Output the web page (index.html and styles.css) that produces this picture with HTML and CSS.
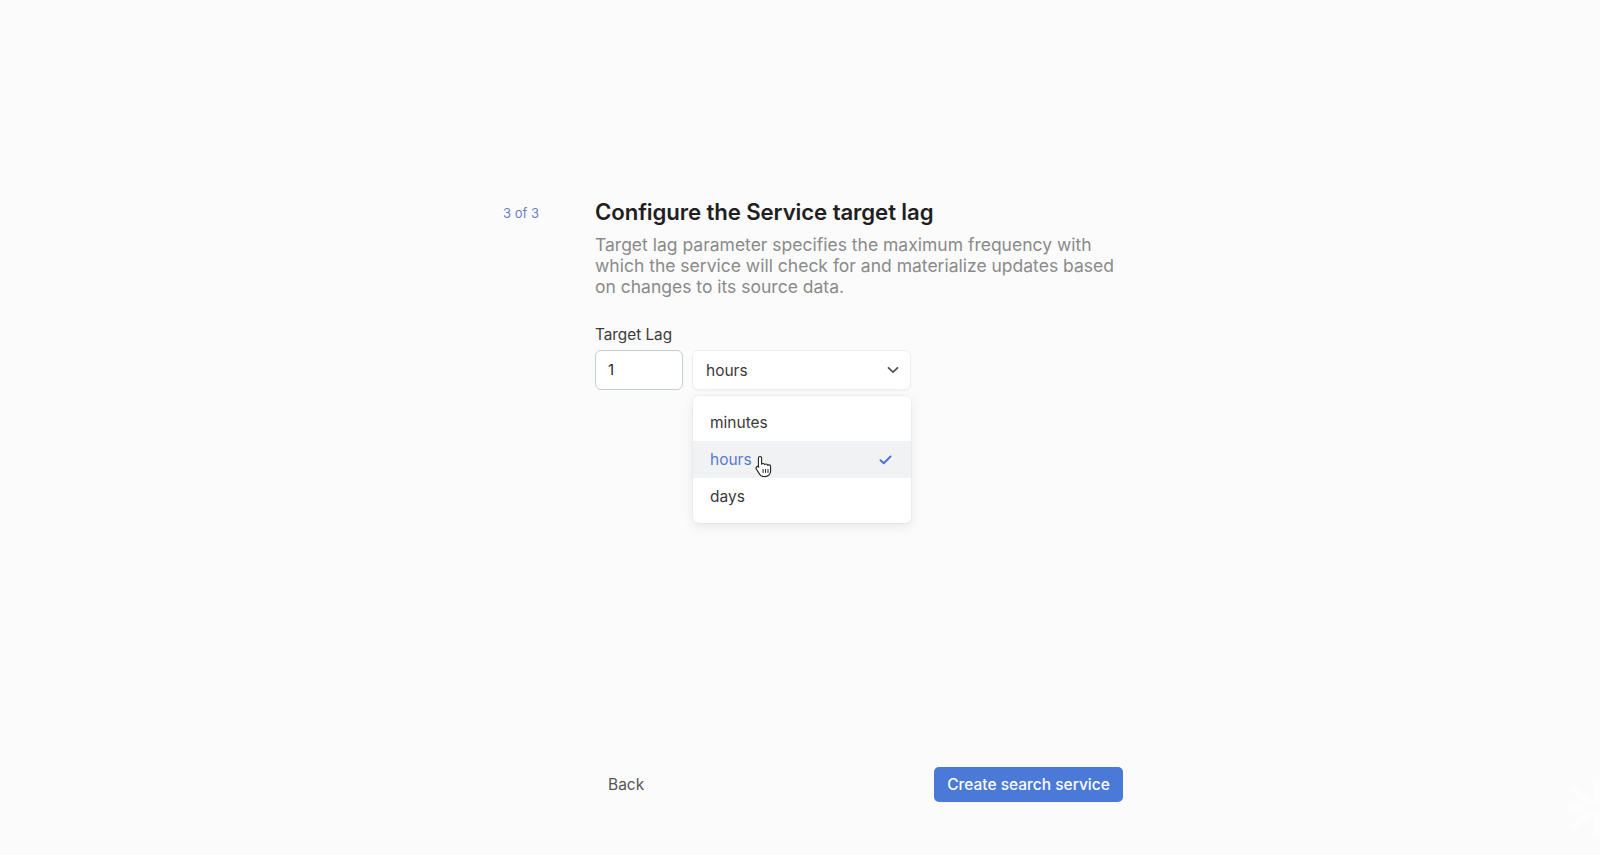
FILE: index.html
```html
<!DOCTYPE html>
<html lang="en">
<head>
<meta charset="utf-8">
<title>Configure the Service target lag</title>
<link rel="stylesheet" href="styles.css">
</head>
<body>
<div class="page">
  <main class="wizard">
    <div class="step">3 of 3</div>
    <section class="content">
      <h1 class="title">Configure the Service target lag</h1>
      <p class="desc">Target lag parameter specifies the maximum frequency with which the service will check for and materialize updates based on changes to its source data.</p>
      <div class="field">
        <label class="label">Target Lag</label>
        <div class="controls">
          <div class="input">1</div>
          <div class="select-wrap">
            <div class="select">
              <span>hours</span>
              <svg class="chev" width="12" height="8" viewBox="0 0 12 8"><path d="M1.5 1.8 6 6.2 10.5 1.8" fill="none" stroke="#555" stroke-width="1.8" stroke-linecap="round" stroke-linejoin="round"/></svg>
            </div>
            <ul class="menu">
              <li class="opt">minutes</li>
              <li class="opt active">
                <span>hours</span>
                <svg class="check" width="13" height="10" viewBox="0 0 13 10"><path d="M1.5 5.2 4.8 8.3 11.5 1.5" fill="none" stroke="#4f73d0" stroke-width="2" stroke-linecap="round" stroke-linejoin="round"/></svg>
                <svg class="cursor" width="18" height="22" viewBox="0 0 18 22"><path d="M5 1.5c.9 0 1.6.7 1.6 1.6v6.2c.3-.5.9-.8 1.5-.8.8 0 1.4.5 1.6 1.2.3-.4.8-.7 1.4-.7.8 0 1.5.6 1.6 1.4.3-.3.7-.5 1.2-.5 1 0 1.7.8 1.7 1.7v4.6c0 2.9-2.3 5.3-5.3 5.3H8.6c-1.6 0-3-.8-3.9-2.1L1.3 14c-.5-.8-.3-1.8.5-2.3.7-.4 1.6-.3 2.1.3l-.5.1V3.1c0-.9.7-1.6 1.6-1.6z" fill="#fff" stroke="#222" stroke-width="1.1" stroke-linejoin="round"/><path d="M8.1 14.5v3M10.6 14.5v3M13 14.5v3" stroke="#222" stroke-width="1" stroke-linecap="round"/></svg>
              </li>
              <li class="opt">days</li>
            </ul>
          </div>
        </div>
      </div>
    </section>
  </main>
  <footer class="footer">
    <button class="back">Back</button>
    <button class="primary">Create search service</button>
  </footer>
  <svg class="watermark" width="60" height="62" viewBox="0 0 60 62"><g fill="none" stroke="#ffffff" stroke-width="7" stroke-linecap="round"><path d="M35 6v18M35 38v18M12 13l14 11M12 49l14-11M6 31h14"/></g><circle cx="44" cy="31" r="6" fill="#ffffff"/></svg>
</div>
</body>
</html>
```
FILE: styles.css
```css
* { box-sizing: border-box; }
html, body { margin: 0; padding: 0; }
body {
  background: #fbfbfc;
  font-family: Inter, "Noto Sans", "Liberation Sans", sans-serif;
  color: #2b2b2b;
}
.page {
  position: relative;
  height: 855px;
  display: flex;
  flex-direction: column;
  align-items: center;
  overflow: hidden;
}
.wizard {
  width: 646px;
  display: flex;
  padding-top: 198px;
  padding-left: 26px;
}
.step {
  width: 92px;
  flex: none;
  font-size: 13px;
  color: #6b7fcf;
  padding-top: 7px;
}
.content { width: 528px; flex: none; }
.title {
  margin: 0;
  font-size: 22.2px;
  font-weight: 560;
  line-height: 27px;
  color: #1f1f1f;
  letter-spacing: -0.1px;
}
.desc {
  margin: 9px 0 0;
  font-size: 17.5px;
  line-height: 21px;
  color: #8a8a8a;
}
.field { margin-top: 29px; }
.label {
  display: block;
  font-size: 15.3px;
  line-height: 18px;
  color: #3a3a3a;
}
.controls {
  margin-top: 6px;
  display: flex;
  gap: 9px;
  align-items: flex-start;
}
.input {
  width: 88px;
  height: 40px;
  border: 1.5px solid #c5d0cc;
  border-radius: 6px;
  background: #fff;
  font-size: 15px;
  color: #2b2b2b;
  padding: 9px 12px;
}
.select-wrap { width: 219px; }
.select {
  height: 40px;
  border: 1px solid #eeeff1;
  border-radius: 6px;
  background: #fff;
  box-shadow: 0 1px 2px rgba(0,0,0,0.04);
  display: flex;
  align-items: center;
  justify-content: space-between;
  padding: 0 11px 0 13px;
  font-size: 15.5px;
  color: #3a3a3a;
}
.menu {
  list-style: none;
  margin: 6px 0 0 1px;
  padding: 8px 0;
  width: 218px;
  background: #fff;
  border-radius: 6px;
  box-shadow: 0 3px 12px rgba(0,0,0,0.09), 0 0 0 1px rgba(0,0,0,0.025);
}
.opt {
  position: relative;
  height: 37px;
  display: flex;
  align-items: center;
  justify-content: space-between;
  padding: 0 19px 0 17px;
  font-size: 15.5px;
  color: #3a3a3a;
}
.opt.active {
  background: #f1f2f4;
  color: #5a78d0;
}
.cursor {
  position: absolute;
  left: 62px;
  top: 14px;
}
.footer {
  margin-top: auto;
  margin-bottom: 53px;
  width: 528px;
  margin-left: 118px;
  display: flex;
  justify-content: space-between;
  align-items: center;
}
.back {
  font-family: inherit;
  font-size: 15.5px;
  color: #555;
  background: none;
  border: 0;
  padding: 8px 13px;
}
.primary {
  font-family: inherit;
  font-size: 15.5px;
  font-weight: 500;
  color: #fff;
  background: #4a79d8;
  border: 0;
  border-radius: 5px;
  height: 35px;
  width: 189px;
  padding: 0;
}
.watermark {
  position: absolute;
  right: -22px;
  bottom: 16px;
  opacity: 0.7;
}
```
